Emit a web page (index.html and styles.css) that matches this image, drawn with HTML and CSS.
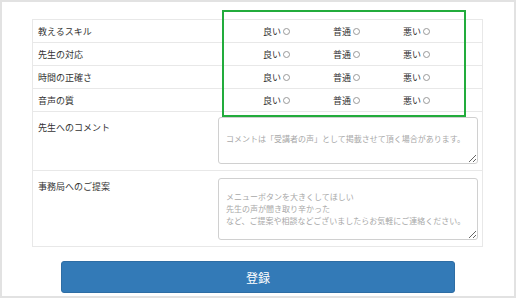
FILE: index.html
```html
<!DOCTYPE html>
<html lang="ja">
<head>
  <meta charset="utf-8">
  <title>アンケート</title>
  <link rel="stylesheet" href="styles.css">
</head>
<body>
  <div class="frame">
    <div class="survey">
      <div class="row rating-row">
        <div class="label">教えるスキル</div>
        <div class="ratings">
          <label class="opt">良い<input type="radio" name="skill"></label>
          <label class="opt">普通<input type="radio" name="skill"></label>
          <label class="opt">悪い<input type="radio" name="skill"></label>
        </div>
      </div>
      <div class="row rating-row">
        <div class="label">先生の対応</div>
        <div class="ratings">
          <label class="opt">良い<input type="radio" name="support"></label>
          <label class="opt">普通<input type="radio" name="support"></label>
          <label class="opt">悪い<input type="radio" name="support"></label>
        </div>
      </div>
      <div class="row rating-row">
        <div class="label">時間の正確さ</div>
        <div class="ratings">
          <label class="opt">良い<input type="radio" name="time"></label>
          <label class="opt">普通<input type="radio" name="time"></label>
          <label class="opt">悪い<input type="radio" name="time"></label>
        </div>
      </div>
      <div class="row rating-row">
        <div class="label">音声の質</div>
        <div class="ratings">
          <label class="opt">良い<input type="radio" name="audio"></label>
          <label class="opt">普通<input type="radio" name="audio"></label>
          <label class="opt">悪い<input type="radio" name="audio"></label>
        </div>
      </div>
      <div class="row text-row">
        <div class="label">先生へのコメント</div>
        <div class="field">
          <textarea class="comment" placeholder="コメントは「受講者の声」として掲載させて頂く場合があります。"></textarea>
        </div>
      </div>
      <div class="row text-row">
        <div class="label">事務局へのご提案</div>
        <div class="field proposal-field">
          <textarea class="proposal" placeholder="メニューボタンを大きくしてほしい&#10;先生の声が聞き取り辛かった&#10;など、ご提案や相談などございましたらお気軽にご連絡ください。"></textarea>
        </div>
      </div>
    </div>

    <button class="submit">登録</button>

    <div class="highlight"></div>
  </div>
</body>
</html>
```

FILE: styles.css
```css
body {
  margin: 0;
  font-family: "Noto Sans CJK JP", "Noto Sans", sans-serif;
  color: #333;
}

.frame {
  position: relative;
  box-sizing: border-box;
  width: 516px;
  height: 298px;
  border: 2px solid #e2e2e2;
  padding: 17px 0 0 30px;
}

.survey {
  width: 451px;
  box-sizing: border-box;
  border: 1px solid #e8e8e8;
  border-top: none;
}

.row {
  display: grid;
  grid-template-columns: 180px 1fr;
  border-top: 1px solid #e8e8e8;
}

.label {
  padding-left: 5px;
  font-size: 9px;
}

.rating-row {
  height: 22px;
  align-items: center;
}

.ratings {
  display: flex;
  padding-left: 50px;
  font-size: 9px;
}

.opt {
  width: 70px;
  display: flex;
  align-items: center;
}

.opt input {
  appearance: none;
  width: 7px;
  height: 7px;
  margin: 0 0 0 2px;
  border: 1px solid #999;
  border-radius: 50%;
}

.text-row .label {
  padding-top: 9px;
}

.field {
  padding: 5px 4px 6px 5px;
}

.proposal-field {
  padding-top: 7px;
}

textarea {
  display: block;
  box-sizing: border-box;
  width: 100%;
  margin: 0;
  padding: 12px 7px;
  border: 1px solid #d0d0d0;
  border-radius: 3px;
  font-family: "Noto Sans CJK JP", sans-serif;
  font-size: 8px;
  line-height: 12px;
}

textarea::placeholder {
  color: #a8a8a8;
}

.comment {
  height: 47px;
  padding-top: 15px;
}

.proposal {
  height: 62px;
}

.submit {
  display: block;
  width: 394px;
  height: 32px;
  margin: 14px 0 0 29px;
  background-color: #337ab7;
  border: 1px solid #2e6da4;
  border-radius: 3px;
  color: #fff;
  font-family: "Noto Sans CJK JP", sans-serif;
  font-size: 12px;
  cursor: pointer;
}

.highlight {
  position: absolute;
  left: 220px;
  top: 8px;
  width: 244px;
  height: 107px;
  box-sizing: border-box;
  border: 2px solid #22ac3c;
}
```
